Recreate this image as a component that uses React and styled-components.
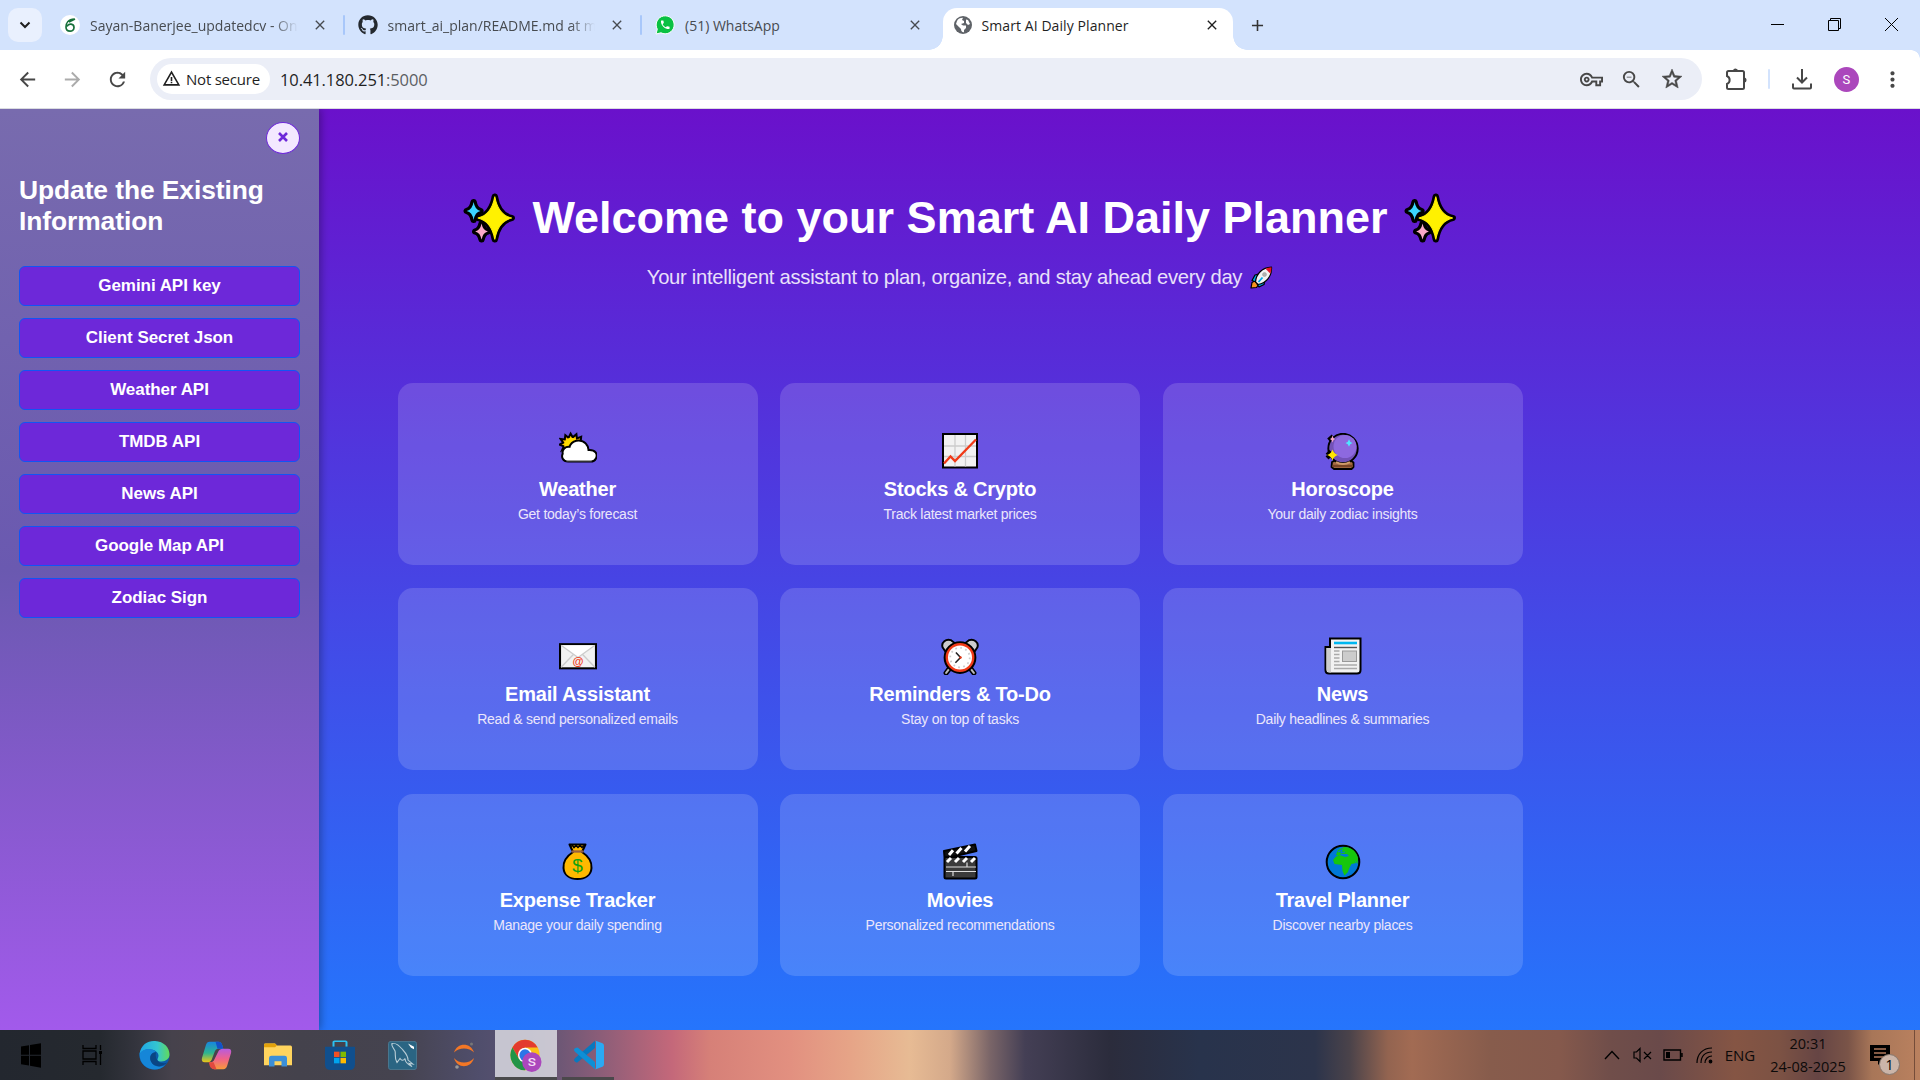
import React from "react";
import styled, { createGlobalStyle } from "styled-components";
import {
  MdArrowBack, MdArrowForward, MdRefresh, MdStarOutline,
  MdMoreVert, MdZoomOut, MdOutlineVpnKey, MdWarningAmber, MdClose, MdAdd, MdPhone,
} from "react-icons/md";
import { FaGithub } from "react-icons/fa";

const ui = `"Open Sans", "Noto Sans", sans-serif`;
const arial = `"Liberation Sans", Arial, sans-serif`;

const Global = createGlobalStyle`
  *, *::before, *::after { box-sizing: border-box; }
  body { margin: 0; overflow: hidden; font-family: ${arial}; }
  svg { display: block; flex: none; }
`;

const Screen = styled.div`
  width: 1920px;
  height: 1080px;
  display: flex;
  flex-direction: column;
  overflow: hidden;
`;

/* ---------- browser chrome ---------- */
const TabStrip = styled.div`
  height: 50px;
  flex: none;
  display: flex;
  align-items: stretch;
  background: #d3e3fd;
  padding-left: 8px;
`;
const TabSearch = styled.div`
  width: 34px;
  height: 34px;
  margin: 8px 4px 0 0;
  border-radius: 10px;
  background: #e9f0fe;
  display: grid;
  place-items: center;
`;
const Tab = styled.div`
  width: 297.5px;
  display: flex;
  align-items: center;
  padding: 0 16px 0 14px;
  color: #474b50;
  font: 400 14px ${ui};
`;
const Divider = styled.i`
  width: 2px;
  height: 20px;
  margin: 0 -1px;
  align-self: center;
  border-radius: 1px;
  background: ${(p) => p.$color || "#a8c7fa"};
`;
const ActiveTab = styled.div`
  position: relative;
  width: 290px;
  height: 42px;
  margin: 8px 0 0 4px;
  border-radius: 14px 14px 0 0;
  background: #fff;
  color: #1f1f1f;
  display: flex;
  align-items: center;
  padding: 0 13px 8px 10px;
  font: 400 14px ${ui};
  &::before, &::after {
    content: "";
    position: absolute;
    bottom: 0;
    width: 14px;
    height: 14px;
  }
  &::before { left: -14px; background: radial-gradient(circle at 0 0, transparent 13.5px, #fff 14px); }
  &::after { right: -14px; background: radial-gradient(circle at 100% 0, transparent 13.5px, #fff 14px); }
`;
const Favicon = styled.span`
  width: 20px;
  height: 20px;
  flex: none;
  display: grid;
  place-items: center;
`;
const TabTitle = styled.span`
  flex: 1;
  min-width: 0;
  margin: 0 14px 0 ${(p) => p.$gap || 10}px;
  overflow: hidden;
  white-space: nowrap;
  letter-spacing: ${(p) => p.$ls || 0}px;
  ${(p) => p.$fade && "mask-image: linear-gradient(90deg, #000 88%, transparent);"}
`;
const NewTab = styled.div`
  width: 49px;
  display: grid;
  place-items: center;
  color: #333;
`;
const WindowControls = styled.div`
  margin-left: auto;
  display: flex;
  align-items: center;
  gap: 44px;
  padding: 0 22px 2px 0;
`;
const Toolbar = styled.div`
  height: 59px;
  flex: none;
  display: flex;
  align-items: center;
  background: #fff;
  border-bottom: 1px solid #dadce0;
  padding: 0 15px 0 16px;
  color: #474747;
  position: relative;
  &::after {
    content: "";
    position: absolute;
    right: 0;
    top: 0;
    width: 9px;
    height: 9px;
    background: radial-gradient(circle at 0 100%, transparent 8.5px, #d3e3fd 9px);
  }
`;
const NavButtons = styled.div`
  width: 134px;
  display: flex;
  gap: 22px;
  svg:nth-child(2) { color: #ababab; }
`;
const Omnibox = styled.div`
  width: 1552px;
  height: 42px;
  border-radius: 21px;
  background: #ebeef7;
  display: flex;
  align-items: center;
  padding: 0 18px 0 7px;
`;
const Chip = styled.div`
  width: 113px;
  height: 30px;
  border-radius: 15px;
  background: #fff;
  color: #1f1f1f;
  display: flex;
  align-items: center;
  gap: 5px;
  padding: 0 0 1px 5px;
  white-space: nowrap;
  font: 400 15px ${ui};
  letter-spacing: -0.22px;
`;
const Url = styled.span`
  margin-left: 10px;
  flex: 1;
  color: #5b5e63;
  font: 400 16.5px ${ui};
  letter-spacing: -0.1px;
  b { font-weight: 400; color: #1f1f1f; }
`;
const OmniActions = styled.div`
  display: flex;
  align-items: center;
  gap: 17px;
`;
const ToolbarActions = styled.div`
  flex: 1;
  display: flex;
  align-items: center;
  justify-content: space-between;
  padding-left: 22px;
`;
const Avatar = styled.span`
  width: 25px;
  height: 25px;
  border-radius: 50%;
  background: #ab47bc;
  color: #fff;
  display: grid;
  place-items: center;
  font: 400 13px Roboto, sans-serif;
`;

/* ---------- page ---------- */
const Page = styled.div`
  height: 921px;
  flex: none;
  display: flex;
  overflow: hidden;
  background: linear-gradient(180deg, #6a11cb 0%, #2575fc 100%);
  position: relative;
`;
const Sidebar = styled.aside`
  position: absolute;
  z-index: 1;
  left: 0;
  top: 0;
  width: 319px;
  height: 100%;
  padding: 13px 19px;
  display: flex;
  flex-direction: column;
  background: linear-gradient(180deg, #786bae 0%, #6a59b0 50%, #a25aeb 100%);
  box-shadow: 2px 0 8px rgba(0, 0, 0, 0.3);
`;
const CloseButton = styled.button`
  align-self: flex-end;
  width: 34px;
  height: 32px;
  padding: 0 0 3px;
  border: 1px solid #6d28d9;
  border-radius: 50%;
  background: #f3e8ff;
  color: #6d28d9;
  display: grid;
  place-items: center;
`;
const SideTitle = styled.h2`
  margin: 21px 0 29px;
  color: #fff;
  font: 700 26.4px/31px ${arial};
  letter-spacing: -0.08px;
`;
const SideList = styled.div`
  display: flex;
  flex-direction: column;
  gap: 12px;
`;
const SideButton = styled.button`
  height: 40px;
  padding: 0 0 1px;
  border: 1px solid #1354f4;
  border-radius: 6px;
  background: #6d28d9;
  color: #fff;
  font: 700 17px ${arial};
  letter-spacing: -0.05px;
`;
const Main = styled.main`
  width: 1125px;
  margin: 0 auto;
  display: flex;
  flex-direction: column;
  align-items: center;
  color: #fff;
`;
const Hero = styled.h1`
  height: 60px;
  margin: 79px 0 0;
  display: flex;
  align-items: center;
  gap: 16px;
  white-space: nowrap;
  font: 700 45px/54px ${arial};
`;
const Tagline = styled.p`
  margin: 9px 0 0;
  height: 40px;
  display: flex;
  align-items: center;
  gap: 8px;
  color: #e9e0fa;
  white-space: nowrap;
  font: 400 20.2px ${arial};
  letter-spacing: -0.27px;
`;
const Grid = styled.div`
  width: 100%;
  margin-top: 86px;
  display: grid;
  grid-template-columns: repeat(3, 1fr);
  grid-auto-rows: 182px;
  gap: 23.4px 22.5px;
`;
const Card = styled.div`
  border-radius: 15px;
  background: rgba(255, 255, 255, 0.15);
  display: flex;
  flex-direction: column;
  align-items: center;
  padding-top: 49px;
  h3 { margin: 8px 0 0; font: 700 20px/23px ${arial}; letter-spacing: -0.22px; }
  p { margin: 5px 0 0; font: 400 14px/16px ${arial}; color: #ebe6fb; letter-spacing: -0.26px; }
`;
const CardIcon = styled.div`
  height: 38px;
  display: grid;
  place-items: center;
`;

/* ---------- taskbar ---------- */
const Taskbar = styled.div`
  height: 50px;
  flex: none;
  display: flex;
  font-family: ${ui};
  color: #0c0a0a;
  background: linear-gradient(90deg,
    #23272f 0, #25292f 100px, #33343d 135px, #46424c 172px, #49434b 200px, #44424c 300px, #45434f 400px,
    #504e6c 480px, #5f5474 540px, #8b5d78 600px, #c4687a 672px, #d68078 710px, #e29080 790px,
    #e6a487 850px, #e7bb94 910px, #d4a98a 950px, #7a6568 990px, #443f55 1025px, #2b2c3c 1110px,
    #28334c 1200px, #2c344b 1315px, #4b434a 1350px, #936450 1388px, #a26b53 1412px, #875c4c 1490px,
    #85594c 1560px, #704e4a 1610px, #6a4a4a 1660px, #855544 1735px, #7c5244 1780px,
    #664544 1818px, #7a5448 1848px, #a87658 1872px, #ba815f 1920px);
`;
const Slot = styled.div`
  width: 62px;
  display: grid;
  place-items: center;
  background: ${(p) => (p.$active ? "rgba(226,226,232,0.8)" : "none")};
  border-bottom: ${(p) => (p.$active ? "3px solid #4a4a4c" : "0")};
  padding-top: ${(p) => (p.$active ? 3 : 0)}px;
  &:first-child { width: 61px; }
`;
const RunningSlot = styled(Slot)`
  width: 52px;
  margin-left: 5px;
  border-bottom: 3px solid #4b484b;
  padding-top: 3px;
`;
const Tray = styled.div`
  margin-left: auto;
  display: flex;
  align-items: center;
  font-size: 15px;
`;
const TrayItem = styled.span`
  width: ${(p) => p.$w}px;
  display: grid;
  place-items: center;
`;
const Clock = styled.div`
  width: 100px;
  text-align: center;
  font-size: 14.5px;
  line-height: 23px;
  letter-spacing: -0.02px;
  margin-left: -3px;
`;
const Notice = styled.div`
  width: 57px;
  height: 50px;
  display: grid;
  padding: 13px 0 0 12px;
  border-right: 1px solid rgba(50, 25, 20, 0.5);
  margin-right: 5px;
`;

/* ---------- drawings ---------- */
const S = ({ s = 36, w, h, vb = "0 0 36 36", children, ...r }) => (
  <svg width={w || s} height={h || s} viewBox={vb} fill="none" {...r}>{children}</svg>
);
const star = (x, y, a, b, k) =>
  `M${x} ${y - b}Q${x + k} ${y - k} ${x + a} ${y}Q${x + k} ${y + k} ${x} ${y + b}Q${x - k} ${y + k} ${x - a} ${y}Q${x - k} ${y - k} ${x} ${y - b}Z`;
const Sparkles = () => (
  <S w={53} h={52} vb="0 0 50 52" preserveAspectRatio="none">
    <g stroke="#000" strokeWidth="6" strokeLinejoin="round">
      <path d={star(10, 19, 6.5, 9, 1.2)} /><path d={star(17.5, 39.5, 6, 8, 1.2)} /><path d={star(30, 26, 16, 21.5, 3)} />
    </g>
    <path d={star(10, 19, 6.5, 9, 1.2)} fill="#3bd5ff" />
    <path d={star(17.5, 39.5, 6, 8, 1.2)} fill="#f9a8c8" />
    <path d={star(30, 26, 16, 21.5, 3)} fill="#fff100" stroke="#fff100" strokeWidth="1" />
  </S>
);
const Rocket = () => (
  <S w={23} h={23} vb="0 0 23 23" stroke="#000" strokeWidth="1.2" strokeLinejoin="round">
    <path d="M1 22L2 16.5L5.5 14.5L9 18L6.5 21.5Z" fill="#f7931e" />
    <path d="M2 14.5L5 9L9 8L9 14L6 16ZM9 21L14 18.5L15 14L10 14L7 18Z" fill="#00a8e8" />
    <path d="M5.5 16C6 8 12 1.500 21.5 1.2C22 10 16.500 17 8 18.500Z" fill="#f2f2f2" />
    <path d="M15.500 2.800C17.500 1.800 19.500 1.300 21.400 1.300C21.600 3.200 21.200 5.500 20.200 7.500Z" fill="#e81224" stroke="none" />
    <path d="M8.500 16L12.500 11.500" stroke="#00a8e8" strokeWidth="1.800" />
    <circle cx="14.500" cy="8.500" r="2" fill="#b0b0b0" stroke="#999" strokeWidth=".5" />
  </S>
);
const Weather = () => (
  <S s={38} style={{ marginTop: -2 }}>
    <path d="M9 13L3.500 16.500L5 13L1 11.500L4.500 9.500L2 6L6 6.500L6.500 2.500L9.500 5L11.500 1L13.500 4.500L17 1.500L17.500 5.500L21.500 4L21 9Z" transform="translate(-.5 1.500)" fill="#ffc400" stroke="#000" strokeWidth="1.900" strokeLinejoin="miter" />
    <circle cx="11.500" cy="13" r="6.500" fill="#ffdc00" />
    <path d="M8 30C3 30 1.500 25.500 3 22.500C2.200 18.500 5.500 15.500 9.500 16C11 10 20 7.500 25 13C27 15 27.500 17 27.500 19C34 18.500 36.500 23 34.500 27C33.500 29 32 30 29.500 30Z" transform="translate(.5 -1)" fill="#fff" stroke="#000" strokeWidth="1.900" />
    <path d="M7 28.200H31" stroke="#aaa" strokeWidth="1" />
  </S>
);
const Chart = () => (
  <S>
    <rect x="1" y="1" width="34" height="33.500" fill="#f2f2f2" stroke="#000" strokeWidth="2" />
    <path d="M13 2V33.500M23.500 2V33.500M2 13H34M2 23.500H34" stroke="#ccc" strokeWidth="1.300" />
    <path d="M2 30.500L8.500 23.500L13 28L34 6.500" stroke="#f03a17" strokeWidth="2.300" />
  </S>
);
const Crystal = () => (
  <S s={37} vb="0 0 37 37">
    <path d="M8 29L12 27H26L29.500 29.500V34L27.500 36H10L7.500 34Z" fill="#a56b42" stroke="#000" strokeWidth="1.800" strokeLinejoin="round" />
    <path d="M8.500 33H29" stroke="#7a4526" strokeWidth="2.400" />
    <circle cx="19" cy="15.500" r="14.700" fill="#7352b8" stroke="#000" strokeWidth="1.900" />
    <circle cx="21" cy="13.500" r="11.500" fill="#8d69df" />
    <g stroke="#000" strokeWidth="4" strokeLinejoin="round"><path d="M4.500 7L9 3" /><path d="M3 22L7 18.500M3 22L6 25" /></g>
    <path d={star(8.500, 6, 2.500, 3.500, .5)} fill="#f9a8c8" />
    <path d={star(8.500, 22, 5.500, 5.500, 1.300)} fill="#ffe600" />
    <path d={star(25, 10, 3.500, 3.800, .7)} fill="#50e6ff" />
    <path d="M12 29.200C16 31.500 22 31.500 26 29.200" stroke="#d09a6a" strokeWidth="2" />
  </S>
);
const Mail = () => (
  <S s={38} vb="0 0 37 37">
    <rect x="1" y="7" width="35" height="23.500" fill="#f2f2f2" stroke="#000" strokeWidth="2" />
    <path d="M2 8L18.500 20L35 8Z" fill="#fff" />
    <path d="M2 8L18.500 20L35 8M2 29.500L14 17M35 29.500L23 17" stroke="#ccc" strokeWidth="1.300" />
    <text x="18.500" y="27" fill="#f03a17" fontSize="11" fontFamily="Liberation Sans" fontWeight="700" textAnchor="middle">@</text>
  </S>
);
const Alarm = () => (
  <S s={38} vb="0 -1 37 37">
    <path d="M8 30L5 34M29 30L32 34" stroke="#000" strokeWidth="5" strokeLinecap="round" />
    <path d="M8 30L5 34M29 30L32 34" stroke="#bbb" strokeWidth="2" strokeLinecap="round" />
    <path d="M4.500 13.500L1.500 9C0 4 5 .5 9.500 2L13.500 5ZM32.500 13.500L35.500 9C37 4 32 .5 27.500 2L23.500 5Z" fill="#ccc" stroke="#000" strokeWidth="1.900" strokeLinejoin="round" />
    <circle cx="18.500" cy="19" r="15" fill="#f03a17" stroke="#000" strokeWidth="1.900" />
    <circle cx="18.500" cy="19" r="11.700" fill="#fff" />
    <circle cx="18.500" cy="19" r="9.500" stroke="#ccc" strokeWidth="1.700" strokeDasharray="1.700 3.274" />
    <path d="M14.500 14L19 19L14 24" stroke="#222" strokeWidth="1.500" /><circle cx="19" cy="19" r="1.200" fill="#f03a17" />
  </S>
);
const Newspaper = () => (
  <S s={38} vb="0 0 38 38">
    <path d="M6 10H1.500V33Q1.500 36.500 5 36.500H33Q36.500 36.500 36.500 33V1.500H6Z" fill="#f2f2f2" stroke="#000" strokeWidth="2" />
    <path d="M2.500 11H7V35.500C4 35.500 2.500 34.500 2.500 32Z" fill="#ccc" />
    <path d="M10 6H33" stroke="#00b7f0" strokeWidth="2.600" /><path d="M10 10.500H33" stroke="#555" strokeWidth="1.400" />
    <path d="M10 14H15.500M10 17.500H15.500M10 21H15.500M10 24.500H15.500M10 28H33M10 31.500H33" stroke="#aaa" strokeWidth="1.300" />
    <rect x="18.500" y="14" width="14" height="10.500" fill="#ccc" stroke="#999" />
  </S>
);
const Money = () => (
  <S s={37} vb="0 0 37 37">
    <path d="M14 9L10.500 1.500H26.500L23 9C29 13 33 19 32.500 25C32 32.500 26 36 18.500 36C11 36 5 32.500 4.500 25C4 19 8 13 14 9Z" fill="#ffb900" stroke="#000" strokeWidth="2" strokeLinejoin="round" />
    <path d="M12 3.500L13.500 2.500L15 4.500L17 2.500L19 4.500L21 2.500L23 4.500L25 2.500" stroke="#000" strokeWidth="1.500" />
    <path d="M12.500 8.500H24.500" stroke="#986040" strokeWidth="2.300" />
    <text x="18.500" y="29" fill="#10a110" fontSize="19" fontFamily="Liberation Sans" textAnchor="middle">$</text>
  </S>
);
const Clapper = () => (
  <S s={37} vb="0 0 37 37">
    <rect x="2.500" y="14" width="32" height="21.500" rx="1.500" fill="#3b3b3b" stroke="#000" strokeWidth="2" />
    <path d="M2 8L33 1.500L34.500 8L9 14H2.500Z" fill="#111" stroke="#000" strokeWidth="2" strokeLinejoin="round" />
    <path d="M7 12L11 7.300M14.500 10.500L19.500 5M23 8.500L28 3M5 19L9 15M13 19L17 15M21 19L25 15M29 19L33 15" stroke="#fff" strokeWidth="3" />
    <path d="M4 24H34M4 28.500H34M25 19.500V24M11 28.500V33" stroke="#ddd" strokeWidth="1.200" />
  </S>
);
const Globe = () => (
  <S>
    <circle cx="18" cy="18" r="16.300" fill="#0078d7" stroke="#000" strokeWidth="2" />
    <path d="M11 11L13 6L19 3C26 2.500 32 8 33 14L32.500 20L29.500 16L31 19L26.500 20C25 23 23.500 25 23 28L19.500 31.500L17.500 27L17 21L9.500 20L8 16L11 12.500L16 11.500L20 13L24 12L22 10H16L14 12Z" fill="#16c60c" />
    <path d="M13 8L17 6L16 9L20 8" stroke="#0078d7" strokeWidth="1.200" />
  </S>
);

const tasks = {
  start: <S w={20} h={25} vb="0 0 20 25"><path fill="#000" d="M0 3.500L8 2.300V11.800H0ZM9 2.100L20 .3V11.800H9ZM0 12.800H8V22.500L0 21.300ZM9 12.800H20V24.700L9 22.800Z" /></S>,
  view: <S w={21} h={20} vb="0 0 21 20" stroke="#000" strokeWidth="1.300"><path d="M1 0V3.500H14V0M1 20V16.500H14V20M1 6H14V14H1ZM18.500 0V5M18.500 9V20" /><path d="M17 7.500H20" strokeWidth="3" /></S>,
  edge: <S w={31} h={31} vb="0 2 31 33" preserveAspectRatio="none">
    <defs><linearGradient id="e1" x1="0" x2="1"><stop stopColor="#1ea6e8" /><stop offset=".6" stopColor="#35c6cf" /><stop offset="1" stopColor="#62da5a" /></linearGradient></defs>
    <circle cx="15.500" cy="18.500" r="15" fill="#0b5cab" />
    <path d="M.5 17C2 6.500 9 2.500 16 3C25 3.500 30.500 10 30.500 17.500C30.500 23 25 26 20 24.500C17 23.500 19.500 21.500 19.500 18.500C19.500 12 6 8 .5 17Z" fill="url(#e1)" />
    <path d="M.5 17C4 10 14 10.500 17 15C12 15 10 20 12 25C14 30 20 32 26 29C18 38 .5 33 .5 17Z" fill="#1586d8" />
    <path d="M17 15C12 15 10 20 12 25C14.500 31 23 31.500 28.500 26C24 28 15 26 17 15Z" fill="#0a4584" />
  </S>,
  copilot: <S w={31} h={29} vb="0 0 32 34" preserveAspectRatio="none">
    <defs><linearGradient id="c1" x1="0" y1="0" x2="0" y2="1"><stop stopColor="#1785e0" /><stop offset=".55" stopColor="#2fb58e" /><stop offset="1" stopColor="#f0c514" /></linearGradient>
      <linearGradient id="c2" x1="0" y1="0" x2="0" y2="1"><stop stopColor="#b65be0" /><stop offset=".5" stopColor="#f0628a" /><stop offset="1" stopColor="#f79a3a" /></linearGradient></defs>
    <path d="M9 1H18Q21 1 22 5L23 9H18Q15 9 14 13L11 22Q10 25 6 25H4Q0 25 1 20L5 5Q6 1 9 1Z" fill="url(#c1)" />
    <path d="M15 1H18Q21 1 22 5L23 9H17Z" fill="#1350c8" />
    <path d="M23 33H14Q11 33 10 29L9 25Q13 25 14 21L18 12Q19 9 23 9H28Q32 9 31 14L27 29Q26 33 23 33Z" fill="url(#c2)" />
    <path d="M8 25H13L16 33H14Q10 33 9 29Z" fill="#e2493f" />
  </S>,
  folder: <S w={28} h={24} vb="0 0 28 29" preserveAspectRatio="none"><path d="M0 2Q0 .5 1.500 .5H11L13 3H26.500Q28 3 28 5V27H0Z" fill="#ffd45e" /><path d="M0 2Q0 .5 1.500 .5H11L13 3L11 5H0Z" fill="#e2a10b" /><path d="M5 28.500V18Q5 15.500 7.500 15.500H20.500Q23 15.500 23 18V28.500H17.500V22H10.500V28.500Z" fill="#3c8fd8" /></S>,
  store: <S w={30} h={30} vb="0 0 30 36" preserveAspectRatio="none"><path d="M8.500 8V2.500Q8.500 1.500 9.500 1.500H20.500Q21.500 1.500 21.500 2.500V8" stroke="#2bc1f2" strokeWidth="2" /><path d="M0 8H30V29Q30 36 24 36H6Q0 36 0 29Z" fill="#104f8d" /><path d="M9 14H14.500V20.500H9Z" fill="#f25022" /><path d="M15.500 14H21V20.500H15.500Z" fill="#7fba00" /><path d="M9 21.500H14.500V28H9Z" fill="#00a4ef" /><path d="M15.500 21.500H21V28H15.500Z" fill="#ffb900" /></S>,
  mysql: <S w={29} h={29} vb="0 0 29 35" preserveAspectRatio="none"><rect x=".5" y=".5" width="28" height="34" rx="2.500" fill="#2a6583" stroke="#4a7a92" /><path d="M4 3C9 2 12 7 15 11C18 15 20 20 20 23L25 28L21 27L24 31C18 27 17 23 17 21C15 25 13 23 12 21L9 26C6 20 8 16 7 12C6 9 3 6 4 3Z" stroke="#b9cdd6" strokeWidth="1.100" /><path d="M20 3L26 7V10L23 8Z" fill="#fff" /></S>,
  jupyter: <S w={22} h={27} vb="0 0 22 27"><path d="M1 10.500C4 0 18 0 21 10.500C16 5 6 5 1 10.500ZM1 16C4 27 18 27 21 16C16 22 6 22 1 16Z" fill="#f37726" /><circle cx="18.500" cy="2" r="1.500" fill="#777" /><circle cx="4" cy="25" r="1.800" fill="#999" /></S>,
  chrome: <S w={32} h={33} vb="0 0 33 40" preserveAspectRatio="none">
    <g transform="translate(0 1) scale(1 1.230)"><circle cx="15.500" cy="15" r="15" fill="#fbc116" /><path d="M2.500 7.500A15 15 0 0 1 28.500 7.500H15.500L9 18.500Z" fill="#e33b2e" /><path d="M2.500 7.500A15 15 0 0 0 15.500 30L22 18.700L9 18.500Z" fill="#229447" /><circle cx="15.500" cy="15" r="7.300" fill="#fff" /><circle cx="15.500" cy="15" r="5.800" fill="#2a75e8" /></g>
    <ellipse cx="22.500" cy="28" rx="10" ry="12" fill="#ab47bc" />
    <text x="22.500" y="33" fill="#f3dff6" fontSize="14" fontFamily="Roboto" fontWeight="500" textAnchor="middle">S</text>
  </S>,
  code: <S w={31} h={30} vb="0 0 31 37" preserveAspectRatio="none"><path d="M22 1L2.500 22Q-.5 25 2.500 27L4 28L22 10Z" fill="#0879bf" /><path d="M2.500 10Q-.5 12 2.500 15L22 36V27L5 9.500Q4 9 2.500 10Z" fill="#0e8fd6" /><path d="M22 .7L29.500 4Q31 5 31 7V30Q31 32 29.500 33L22 36.500Q23 36 23 34V3Q23 1 22 .7Z" fill="#2aa9f3" /></S>,
};

const cards = [
  [Weather, "Weather", "Get today’s forecast"],
  [Chart, "Stocks & Crypto", "Track latest market prices"],
  [Crystal, "Horoscope", "Your daily zodiac insights"],
  [Mail, "Email Assistant", "Read & send personalized emails"],
  [Alarm, "Reminders & To-Do", "Stay on top of tasks"],
  [Newspaper, "News", "Daily headlines & summaries"],
  [Money, "Expense Tracker", "Manage your daily spending"],
  [Clapper, "Movies", "Personalized recommendations"],
  [Globe, "Travel Planner", "Discover nearby places"],
];
const settings = ["Gemini API key", "Client Secret Json", "Weather API", "TMDB API", "News API", "Google Map API", "Zodiac Sign"];

export default function App() {
  return (
    <Screen>
      <Global />
      <TabStrip>
        <TabSearch><S s={12} vb="0 0 12 12"><path d="M1.500 3.500L6 8L10.500 3.500" stroke="#1f1f1f" strokeWidth="2" /></S></TabSearch>
        <Tab>
          <Favicon><S s={20} vb="0 0 20 20"><circle cx="10" cy="10" r="10" fill="#fff" /><path d="M14.500 4C8 4 6 8.500 6 12C6 17.500 14 17.500 14 12.500C14 8.500 8.500 8 7 11.500M9 7L15 4" stroke="#17703a" strokeWidth="1.700" /></S></Favicon>
          <TabTitle $fade>Sayan-Banerjee_updatedcv - Online</TabTitle>
          <MdClose size={16} />
        </Tab>
        <Divider />
        <Tab>
          <Favicon><FaGithub size={20} color="#24292f" /></Favicon>
          <TabTitle $fade>smart_ai_plan/README.md at main</TabTitle>
          <MdClose size={16} />
        </Tab>
        <Divider />
        <Tab>
          <Favicon><S s={20} vb="0 0 20 20"><path d="M1 19L2.300 14.200A9 9 0 1 1 6 17.800Z" fill="#0ac143" stroke="#fff" strokeWidth="1" /><MdPhone x="4.500" y="4" size={11.5} color="#fff" /></S></Favicon>
          <TabTitle>(51) WhatsApp</TabTitle>
          <MdClose size={16} />
        </Tab>
        <ActiveTab>
          <Favicon><S s={18} vb="0 0 18 18"><circle cx="9" cy="9" r="9" fill="#5f6368" /><path d="M3 5C4 3 6 1.800 9 1.800L8 4L10 5V7L7 8L9 9.500H12V12L10 14V16.300C8 16.500 7 15 7 13L5 11L2 8ZM12 3.500L14 4L16 8L14 9L12 7Z" fill="#fff" /></S></Favicon>
          <TabTitle $gap={9} $ls={0.08}>Smart AI Daily Planner</TabTitle>
          <MdClose size={16} />
        </ActiveTab>
        <NewTab><MdAdd size={19} /></NewTab>
        <WindowControls>
          <S s={13} vb="0 0 13 13"><path d="M0 6.500H13" stroke="#000" /></S>
          <S s={13} vb="0 0 13 13"><path d="M.5 2.500H10.500V12.500H.5ZM2.500 2.500V.5H12.500V10.500H10.500" stroke="#000" /></S>
          <S s={13} vb="0 0 13 13"><path d="M0 0L13 13M13 0L0 13" stroke="#000" /></S>
        </WindowControls>
      </TabStrip>
      <Toolbar>
        <NavButtons><MdArrowBack size={23} /><MdArrowForward size={23} /><MdRefresh size={23} /></NavButtons>
        <Omnibox>
          <Chip><MdWarningAmber size={19} />Not secure</Chip>
          <Url><b>10.41.180.251</b>:5000</Url>
          <OmniActions><MdOutlineVpnKey size={23} /><MdZoomOut size={23} /><MdStarOutline size={24} stroke="#474747" strokeWidth=".5" /></OmniActions>
        </Omnibox>
        <ToolbarActions>
          <S s={24} vb="0 0 24 24"><path d="M3 5.500Q3 4 4.500 4H18.500Q20 4 20 5.500V20.500Q20 22 18.500 22H4.500Q3 22 3 20.500V17C6.500 15.500 6.500 10.500 3 9Z" stroke="#474747" strokeWidth="2" /><path d="M9 4A2.500 2.500 0 0 1 14 4ZM20 10.500A2.500 2.500 0 0 1 20 15.500Z" fill="#474747" /></S>
          <Divider $color="#d3e3fd" />
          <S s={22} vb="0 0 22 22"><path d="M11 1V14M6 9.500L11 14.500L16 9.500M2 15.500V19.500Q2 20.500 3 20.500H19Q20 20.500 20 19.500V15.500" stroke="#474747" strokeWidth="2" /></S>
          <Avatar>S</Avatar>
          <MdMoreVert size={25} />
        </ToolbarActions>
      </Toolbar>

      <Page>
        <Sidebar>
          <CloseButton><S s={12} vb="0 0 12 12"><path d="M2 2L10 10M10 2L2 10" stroke="#6d28d9" strokeWidth="2.600" /></S></CloseButton>
          <SideTitle>Update the Existing Information</SideTitle>
          <SideList>{settings.map((s) => <SideButton key={s}>{s}</SideButton>)}</SideList>
        </Sidebar>
        <Main>
          <Hero><Sparkles /><span>Welcome to your Smart AI Daily Planner</span><Sparkles /></Hero>
          <Tagline>Your intelligent assistant to plan, organize, and stay ahead every day <Rocket /></Tagline>
          <Grid>
            {cards.map(([Icon, title, text]) => (
              <Card key={title}><CardIcon><Icon /></CardIcon><h3>{title}</h3><p>{text}</p></Card>
            ))}
          </Grid>
        </Main>
      </Page>

      <Taskbar>
        <Slot>{tasks.start}</Slot>
        <Slot>{tasks.view}</Slot>
        <Slot>{tasks.edge}</Slot>
        <Slot>{tasks.copilot}</Slot>
        <Slot>{tasks.folder}</Slot>
        <Slot>{tasks.store}</Slot>
        <Slot>{tasks.mysql}</Slot>
        <Slot>{tasks.jupyter}</Slot>
        <Slot $active>{tasks.chrome}</Slot>
        <RunningSlot>{tasks.code}</RunningSlot>
        <Tray>
          <TrayItem $w={30}><S w={16} h={10} vb="0 0 16 10"><path d="M1 9L8 1.500L15 9" stroke="#000" strokeWidth="1.400" /></S></TrayItem>
          <TrayItem $w={30}><S w={19} h={16} vb="0 0 19 16" stroke="#000" strokeWidth="1.200"><path d="M1 5H3.500L7 1.500V14.500L3.500 11H1ZM11 5L18 12M18 5L11 12" /></S></TrayItem>
          <TrayItem $w={32}><S w={20} h={12} vb="0 0 20 12"><path d="M1 1H17.500V11H1ZM19 4V8" stroke="#000" strokeWidth="1.400" /><path d="M3 3H7V9H3Z" fill="#000" /></S></TrayItem>
          <TrayItem $w={30}><S w={17} h={17} vb="0 0 17 17" stroke="#000" strokeWidth="1.200"><path d="M1 16C1 7 7 1 16 1M5 16C5 9 9 5 16 5M9 16C9 12 12 9 16 9" /><circle cx="14.500" cy="14.500" r="1.300" fill="#000" /></S></TrayItem>
          <TrayItem $w={42}>ENG</TrayItem>
          <Clock>20:31<br />24-08-2025</Clock>
          <Notice><S w={34} h={34} vb="0 0 34 34"><path d="M0 2H20V18H12L8 22V18H0Z" fill="#000" /><path d="M4 6H16M4 10H16M4 14H16" stroke="#b07a5c" strokeWidth="1.300" /><circle cx="19.500" cy="21.500" r="10" fill="#cbb5a9" stroke="#86786f" /><text x="19.500" y="26.500" textAnchor="middle" fontFamily="Open Sans" fontSize="14" fill="#000">1</text></S></Notice>
        </Tray>
      </Taskbar>
    </Screen>
  );
}
